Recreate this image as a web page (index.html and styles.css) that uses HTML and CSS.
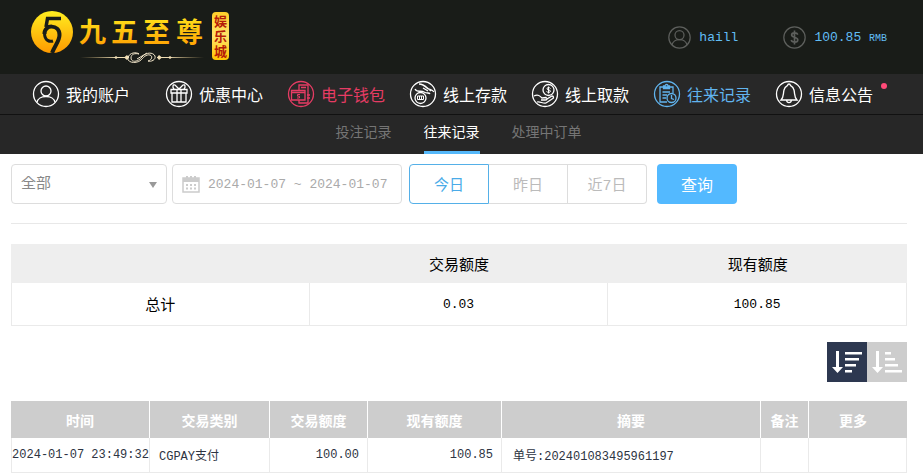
FILE: index.html
```html
<!DOCTYPE html>
<html lang="zh-CN">
<head>
  <meta charset="UTF-8" />
  <meta name="viewport" content="width=device-width, initial-scale=1.0"/>
  <title>往来记录</title>
  <link rel="stylesheet" href="styles.css">
</head>
<body>

  <header class="header">
    <a class="logo" href="#">
      <svg width="202" height="56" viewBox="0 0 202 56" role="img" aria-label="九五至尊 娱乐城">
        <defs>
          <linearGradient id="gold" x1="0" y1="0" x2="0" y2="1">
            <stop offset="0" stop-color="#ffee20"/>
            <stop offset="1" stop-color="#ff9a00"/>
          </linearGradient>
          <linearGradient id="tag" x1="0" y1="0" x2="0" y2="1">
            <stop offset="0" stop-color="#ffcf2a"/>
            <stop offset=".5" stop-color="#ffe36a"/>
            <stop offset="1" stop-color="#ffc400"/>
          </linearGradient>
          <linearGradient id="line" x1="0" y1="0" x2="1" y2="0">
            <stop offset="0" stop-color="#d8b878" stop-opacity="0"/>
            <stop offset=".3" stop-color="#f0deb4"/>
            <stop offset=".7" stop-color="#f0deb4"/>
            <stop offset="1" stop-color="#d8b878" stop-opacity="0"/>
          </linearGradient>
        </defs>
        <circle cx="22" cy="24" r="21" fill="url(#gold)"/>
        <path d="M31 10.500H17.500L16 19" fill="none" stroke="#191c18" stroke-width="3.500"/>
        <path d="M14.500 26C14 16 29.500 16 29.500 27C29.500 33 25 37 22 45" fill="none" stroke="#191c18" stroke-width="4"/>
        <path d="M14.500 25C14.500 33 20 34 23 33" fill="none" stroke="#191c18" stroke-width="3"/>
        <text class="logo-name" x="49 81 113 146" y="34" fill="url(#gold)">九五至尊</text>
        <rect x="50" y="49" width="124" height="1" fill="url(#line)"/>
        <path d="M94 49.500L97 47L99 49.500L97 52ZM132 49.500L129 47L127 49.500L129 52ZM84 49.500L86 48L88 49.500L86 51ZM142 49.500L140 48L138 49.500L140 51Z" fill="#f0deb4"/>
        <rect x="99" y="45" width="28" height="9" fill="#191c18"/>
        <path d="M98 50C99 44 107 44 109 46C105 45 101 46 101 50C101 54 107 55 112 49C116 44 123 44 125 48C126 52 121 54 118 53C122 52 123 48 120 47C116 46 113 50 111 52C107 56 97 55 98 50ZM107 51L117 45" fill="none" stroke="#f0e4c8"/>
        <rect x="182" y="4" width="17" height="48" rx="4" fill="url(#tag)"/>
        <text class="logo-tag" x="184 184 184" y="18 33 48">娱乐城</text>
      </svg>
    </a>
    <div class="account">
      <a class="account-item" href="#">
        <svg class="account-icon" viewBox="0 0 28 28"><circle cx="14" cy="14" r="13"/><circle cx="14" cy="11" r="5.500"/><path d="M5 23C6 14.500 22 14.500 23 23"/></svg>
        <span>haill</span>
      </a>
      <a class="account-item" href="#">
        <svg class="account-icon" viewBox="0 0 28 28"><circle cx="14" cy="14" r="13"/><path d="M18 10.500C17 7.500 10.500 7.500 10.500 11C10.500 14.500 18 13 18 17C18 20.500 11 20.500 10 17M14 5.500V22.500" stroke-width="2"/></svg>
        <span>100.85 <small>RMB</small></span>
      </a>
    </div>
  </header>

  <nav class="nav">
    <a class="nav-item" href="#">
      <svg class="nav-icon" viewBox="0 0 28 28"><circle cx="14" cy="14" r="12.500"/><circle cx="14" cy="11" r="5"/><path d="M5 22.500C6 14.500 22 14.500 23 22.500"/></svg>
      我的账户
    </a>
    <a class="nav-item" href="#">
      <svg class="nav-icon" viewBox="0 0 28 28"><circle cx="14" cy="14" r="12.500"/><path d="M6 9.500H22V13H6ZM7 13V22H21V13M12 9.500V22M16 9.500V22M14 9L10 5C8 4 7 7 9 9M14 9L18 5C20 4 21 7 19 9"/></svg>
      优惠中心
    </a>
    <a class="nav-item nav-item-hot" href="#">
      <svg class="nav-icon" viewBox="0 0 28 28"><circle cx="14" cy="14" r="12.500"/><path d="M12 10V5H21V23H12V20M14 7.500H19M4.500 10.500H18V20H4.500ZM4.500 12.500H18M20 15H23M20 18H23"/><path d="M13 14.500H10.500V16.200H12.500V18H10" stroke-width="1"/></svg>
      电子钱包
    </a>
    <a class="nav-item" href="#">
      <svg class="nav-icon" viewBox="0 0 28 28"><circle cx="14" cy="14" r="12.500"/><circle cx="11.500" cy="18" r="5.500"/><path d="M8.500 16H14.500V19.500H8.500ZM10.500 16V19.500M12.500 16V19.500" stroke-width="1"/><path d="M6 9C8 13 12 10 15 12C18 14 20 12 21 14M10 4C13 4 16 6 18 8C20 10 23 9 25 12M14 8L19 11M16 6L22 11"/></svg>
      线上存款
    </a>
    <a class="nav-item" href="#">
      <svg class="nav-icon" viewBox="0 0 28 28"><circle cx="14" cy="14" r="12.500"/><circle cx="17.500" cy="10" r="5.500"/><path d="M19.500 8.500C18.500 7 15.500 7.500 16 9C16.500 10.500 19.500 9.500 19.500 11.200C19.500 12.700 16.500 12.700 15.500 11.500M17.500 6.500V13.500" stroke-width="1"/><path d="M3 16C7 14 9 16 11 18L15 17.500C17 18.500 16 20 14 20H10M16 19L21 16C23 16 23 18 21 19L15 23C12 24 9 21 6 22"/></svg>
      线上取款
    </a>
    <a class="nav-item nav-item-active" href="#">
      <svg class="nav-icon" viewBox="0 0 28 28"><circle cx="14" cy="14" r="12.500"/><path d="M14 22H7V7H20V13M10.500 8.500V6H12C12 4 15 4 15 6H16.500V8.500ZM9.500 12H17M9.500 15H14M9.500 18H13"/><circle cx="18.500" cy="18" r="4.500"/><path d="M18.500 15V18.500L21 19.500"/></svg>
      往来记录
    </a>
    <a class="nav-item" href="#">
      <svg class="nav-icon" viewBox="0 0 28 28"><circle cx="14" cy="14" r="12.500"/><path d="M6 20C9 17 8 14 9 10C10 6 12 6 12.500 5.500C13 3.500 15 3.500 15.500 5.500C16 6 18 6 19 10C20 14 19 17 22 20ZM11.500 20C12 23.500 16 23.500 16.500 20"/></svg>
      信息公告
      <span class="nav-dot"></span>
    </a>
  </nav>

  <nav class="subnav">
    <a class="subnav-item" href="#">投注记录</a>
    <a class="subnav-item subnav-item-active" href="#">往来记录</a>
    <a class="subnav-item" href="#">处理中订单</a>
  </nav>

  <main class="main">
    <form class="filter">
      <div class="type">
        <select class="type-select" aria-label="交易类别">
          <option>全部</option>
        </select>
      </div>
      <label class="date">
        <svg class="date-icon" viewBox="0 0 18 18"><path d="M1 3H17V17H1Z" fill="none" stroke="#ccc" stroke-width="1.500"/><path d="M1 3H17V7H1ZM4 1H6V5H4ZM8 1H10V5H8ZM12 1H14V5H12Z" fill="#ccc"/><path d="M4 10H14M4 13.500H14" stroke="#ccc" stroke-width="2" stroke-dasharray="2 2"/></svg>
        <input class="date-input" type="text" aria-label="日期" value="2024-01-07 ~ 2024-01-07">
      </label>
      <div class="range">
        <button class="range-btn range-btn-active" type="button">今日</button>
        <button class="range-btn" type="button">昨日</button>
        <button class="range-btn" type="button">近7日</button>
      </div>
      <button class="search-btn" type="button">查询</button>
    </form>

    <table class="total">
      <thead>
        <tr><th></th><th>交易额度</th><th>现有额度</th></tr>
      </thead>
      <tbody>
        <tr><td>总计</td><td class="num">0.03</td><td class="num">100.85</td></tr>
      </tbody>
    </table>

    <div class="sort">
      <button class="sort-btn sort-btn-active" type="button" aria-label="降序">
        <svg width="40" height="40" viewBox="0 0 40 40"><path d="M9 9H12V25H16L10.500 31L5 25H9ZM18 10H35V12.500H18ZM18 16H32V18.500H18ZM18 22H29V24.500H18ZM18 28H25V30.500H18Z" fill="#fff"/></svg>
      </button>
      <button class="sort-btn" type="button" aria-label="升序">
        <svg width="40" height="40" viewBox="0 0 40 40"><path d="M9 9H12V25H16L10.500 31L5 25H9ZM18 10H24V12.500H18ZM18 16H28V18.500H18ZM18 22H31V24.500H18ZM18 28H35V30.500H18Z" fill="#fff"/></svg>
      </button>
    </div>

    <table class="record">
      <colgroup>
        <col class="col-time"><col class="col-type"><col class="col-amount"><col class="col-balance"><col class="col-summary"><col class="col-note"><col class="col-more">
      </colgroup>
      <thead>
        <tr><th>时间</th><th>交易类别</th><th>交易额度</th><th>现有额度</th><th>摘要</th><th>备注</th><th class="more">更多</th></tr>
      </thead>
      <tbody>
        <tr>
          <td class="time">2024-01-07 23:49:32</td>
          <td>CGPAY支付</td>
          <td class="money">100.00</td>
          <td class="money">100.85</td>
          <td class="summary">单号:202401083495961197</td>
          <td></td>
          <td></td>
        </tr>
      </tbody>
    </table>
  </main>

</body>
</html>
```

FILE: styles.css
```css
* {
  box-sizing: border-box;
}
body {
  margin: 0;
  background: #fff;
  color: #000;
  font-family: "Liberation Mono", "Noto Sans CJK SC", monospace;
  font-size: 13px;
}
a {
  color: inherit;
  text-decoration: none;
}
button, input, select {
  font-family: inherit;
  margin: 0;
  padding: 0;
}

/* header */
.header {
  display: flex;
  justify-content: space-between;
  height: 74px;
  padding: 8px 36px 0 30px;
  background: #191c18;
}
.logo svg {
  display: block;
}
.logo-name {
  font: 700 27px "Noto Sans CJK SC", sans-serif;
}
.logo-tag {
  font: 700 13px "Noto Sans CJK SC", sans-serif;
  fill: #b51c08;
}
.account {
  display: flex;
  align-items: center;
  gap: 45px;
  height: 58px;
  color: #61bdf5;
}
.account-item {
  display: flex;
  align-items: center;
  gap: 8px;
}
.account-icon {
  width: 23px;
  height: 23px;
  fill: none;
  stroke: #5d5f5c;
  stroke-width: 1.5;
}
.account small {
  font-size: 10px;
}

/* nav */
.nav {
  display: flex;
  gap: 24px;
  height: 40px;
  padding-left: 32px;
  background: #282828;
  color: #fff;
  font-size: 16px;
}
.nav-item {
  position: relative;
  display: flex;
  align-items: center;
  gap: 6px;
  white-space: nowrap;
}
.nav-item:first-child {
  margin-right: 11px;
}
.nav-item-hot {
  color: #e63c64;
}
.nav-item-active {
  color: #61b4ee;
}
.nav-icon {
  width: 28px;
  height: 28px;
  fill: none;
  stroke: currentColor;
  stroke-width: 1.3;
}
.nav-dot {
  position: absolute;
  top: 9px;
  right: -14px;
  width: 6px;
  height: 6px;
  border-radius: 50%;
  background: #ff4a78;
}
.subnav {
  display: flex;
  justify-content: center;
  gap: 32px;
  height: 40px;
  padding-right: 6px;
  border-top: 1px solid #111;
  background: #272727;
  color: #757575;
  font-size: 14px;
}
.subnav-item {
  line-height: 36px;
  border-bottom: 3px solid transparent;
}
.subnav-item-active {
  color: #fff;
  border-color: #55b8fa;
}

/* filter */
.main {
  padding: 10px 16px 0 11px;
}
.filter {
  display: flex;
  height: 60px;
  margin-bottom: 20px;
  border-bottom: 1px solid #e8e8e8;
}
.type {
  position: relative;
  width: 156px;
  height: 40px;
  margin-right: 5px;
}
.type::after {
  content: "";
  position: absolute;
  top: 18px;
  right: 10px;
  border: 4px solid transparent;
  border-top: 6px solid #999;
  border-bottom: 0;
  pointer-events: none;
}
.type-select {
  width: 100%;
  height: 40px;
  padding-left: 9px;
  border: 1px solid #ddd;
  border-radius: 4px;
  background: #fff;
  color: #888;
  font-size: 15px;
  appearance: none;
}
.date {
  display: flex;
  align-items: center;
  gap: 8px;
  width: 230px;
  height: 40px;
  margin-right: 7px;
  padding: 0 9px;
  border: 1px solid #ddd;
  border-radius: 4px;
}
.date-icon {
  flex: none;
  width: 18px;
  height: 18px;
}
.date-input {
  flex: 1;
  min-width: 0;
  border: 0;
  background: none;
  color: #aaa;
  font-size: 13px;
}
.range {
  display: flex;
  height: 40px;
  margin-right: 10px;
}
.range-btn {
  width: 79px;
  border: 1px solid #ddd;
  border-left: 0;
  background: #fff;
  color: #bbb;
  font-size: 15px;
}
.range-btn:last-child {
  border-radius: 0 4px 4px 0;
}
.range-btn-active {
  width: 80px;
  border: 1px solid #55b0e8;
  border-radius: 4px 0 0 4px;
  color: #4aabe8;
}
.search-btn {
  width: 80px;
  height: 40px;
  border: 0;
  border-radius: 4px;
  background: #53b9ff;
  color: #fff;
  font-size: 16px;
}

/* tables */
table {
  width: 100%;
  border-spacing: 0;
  table-layout: fixed;
}
td {
  border-right: 1px solid #eaeaea;
  border-bottom: 1px solid #eaeaea;
}
td:first-child {
  border-left: 1px solid #eaeaea;
}
.total {
  font-size: 15px;
  text-align: center;
}
.total th {
  height: 39px;
  padding: 0;
  background: #eee;
  font-weight: normal;
}
.total td {
  height: 43px;
  padding: 0;
}
.total .num {
  font-size: 13px;
}
.sort {
  display: flex;
  justify-content: flex-end;
  margin: 16px 0 19px;
}
.sort-btn {
  width: 40px;
  height: 40px;
  border: 0;
  background: #cdcdcd;
}
.sort-btn svg {
  display: block;
}
.sort-btn-active {
  background: #2d3850;
}
.col-time { width: 139px; }
.col-type { width: 120px; }
.col-amount { width: 98px; }
.col-balance { width: 134px; }
.col-summary { width: 259px; }
.col-note { width: 48px; }
.col-more { width: 98px; }
.record {
  color: #2d3442;
  font-size: 12px;
}
.record th {
  height: 37px;
  padding: 0;
  border-right: 1px solid #fff;
  background: #cdcdcd;
  color: #fff;
  font-size: 14px;
}
.record th:last-child {
  border-right: 0;
}
.record .more {
  padding-right: 10px;
}
.record td {
  height: 35px;
  padding: 0 8px 0 9px;
  white-space: nowrap;
}
.record .time {
  padding: 0;
  text-align: center;
}
.record .money {
  text-align: right;
}
.record .summary {
  padding-left: 11px;
}
```
